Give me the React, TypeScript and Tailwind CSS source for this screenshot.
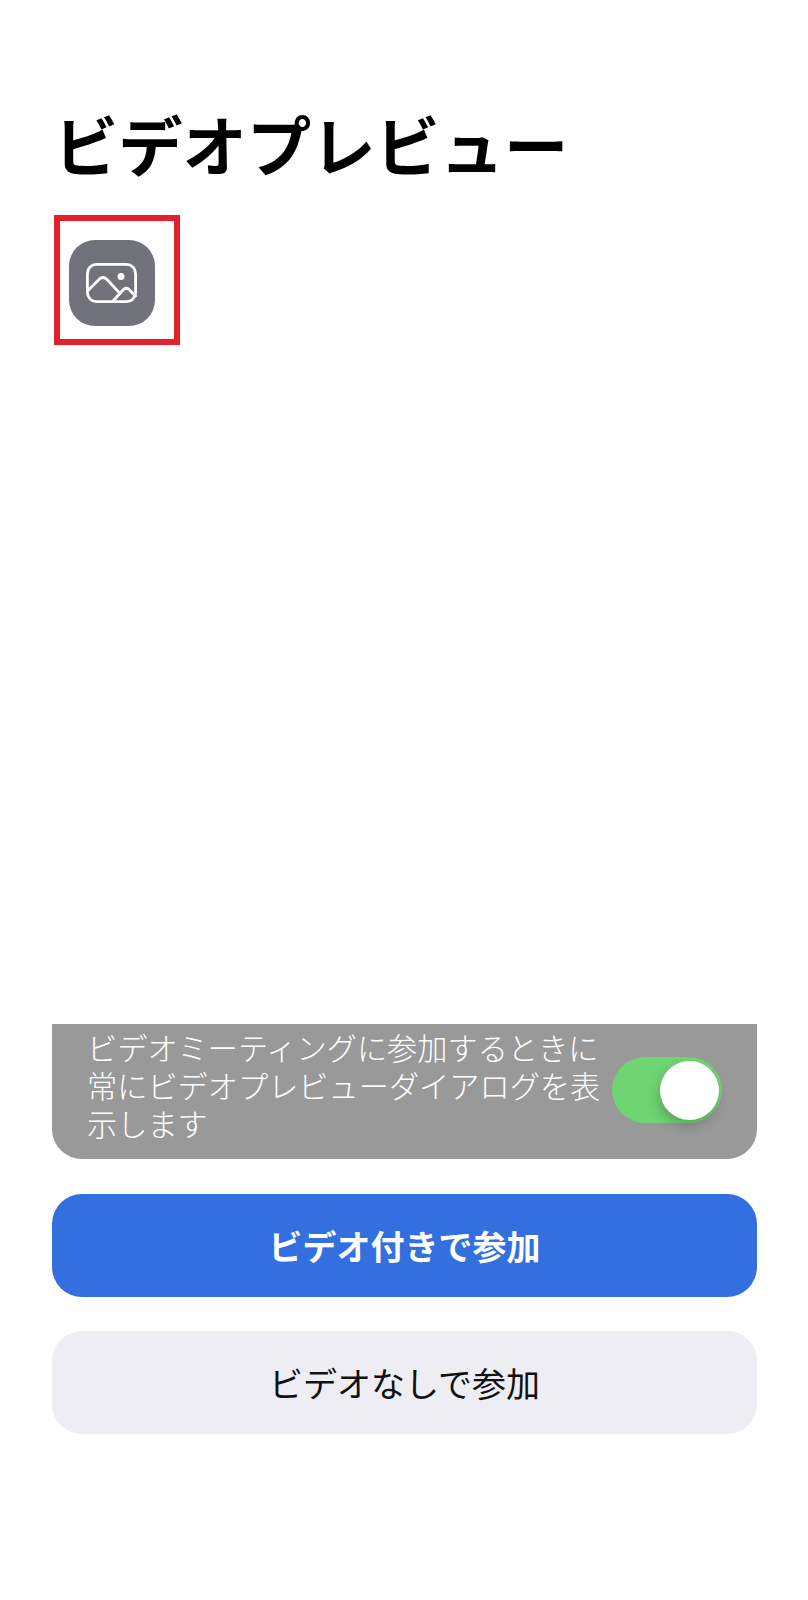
import React from 'react';

const font = { fontFamily: '"Noto Sans CJK JP", "Noto Sans", sans-serif' };

const ImageIcon = () => (
  <svg width="51" height="40" viewBox="0 0 51 40" fill="none" stroke="#ffffff" strokeWidth="2.8" strokeLinecap="round" strokeLinejoin="round">
    <rect x="1.4" y="1.4" width="48.2" height="37.2" rx="9" />
    <path d="M2.5 27 L13 16.5 Q17 12.5 21 16.5 L34 30.5" />
    <path d="M27.5 37.5 L37 27 Q40.2 23.5 43.5 27 L49.5 33" />
    <circle cx="35" cy="13.5" r="3.5" fill="#ffffff" stroke="none" />
  </svg>
);

export default function App() {
  return (
    <div className="w-[808px] h-[1600px] bg-white pl-[52px] pr-[51px] flex flex-col" style={font}>
      <h1 className="mt-[102px] ml-[2px] h-[82px] text-[64.3px] leading-[82px] font-bold text-black whitespace-nowrap">
        ビデオプレビュー
      </h1>
      <div className="mt-[31px] ml-[2px] w-[126px] h-[130px] border-[6px] border-[#e3202c] flex items-center justify-center">
        <div className="w-[86px] h-[86px] -ml-[11px] mt-[6px] rounded-[26px] bg-[#72727c] flex items-center justify-center">
          <ImageIcon />
        </div>
      </div>

      <div className="mt-[679px] h-[135px] rounded-b-[30px] bg-[#999999] pl-[35px] pr-[35px] flex items-center justify-between">
        <p className="w-[518px] pb-[13px] text-[30.2px] leading-[38px] text-white font-light">
          ビデオミーティングに参加するときに常にビデオプレビューダイアログを表示します
        </p>
        <div className="w-[110px] h-[66px] -mt-[3px] rounded-full bg-[#6fd472] flex items-center justify-end pr-[3px] shrink-0">
          <div className="w-[59px] h-[59px] rounded-full bg-white shadow-[-2px_6px_12px_rgba(0,0,0,0.2)]" />
        </div>
      </div>

      <button className="mt-[35px] h-[103px] rounded-[30px] bg-[#346fe0] text-white text-[34px] font-semibold flex items-center justify-center">
        ビデオ付きで参加
      </button>
      <button className="mt-[34px] h-[103px] rounded-[30px] bg-[#ededf3] text-[#111111] text-[34px] font-normal flex items-center justify-center">
        ビデオなしで参加
      </button>
    </div>
  );
}
